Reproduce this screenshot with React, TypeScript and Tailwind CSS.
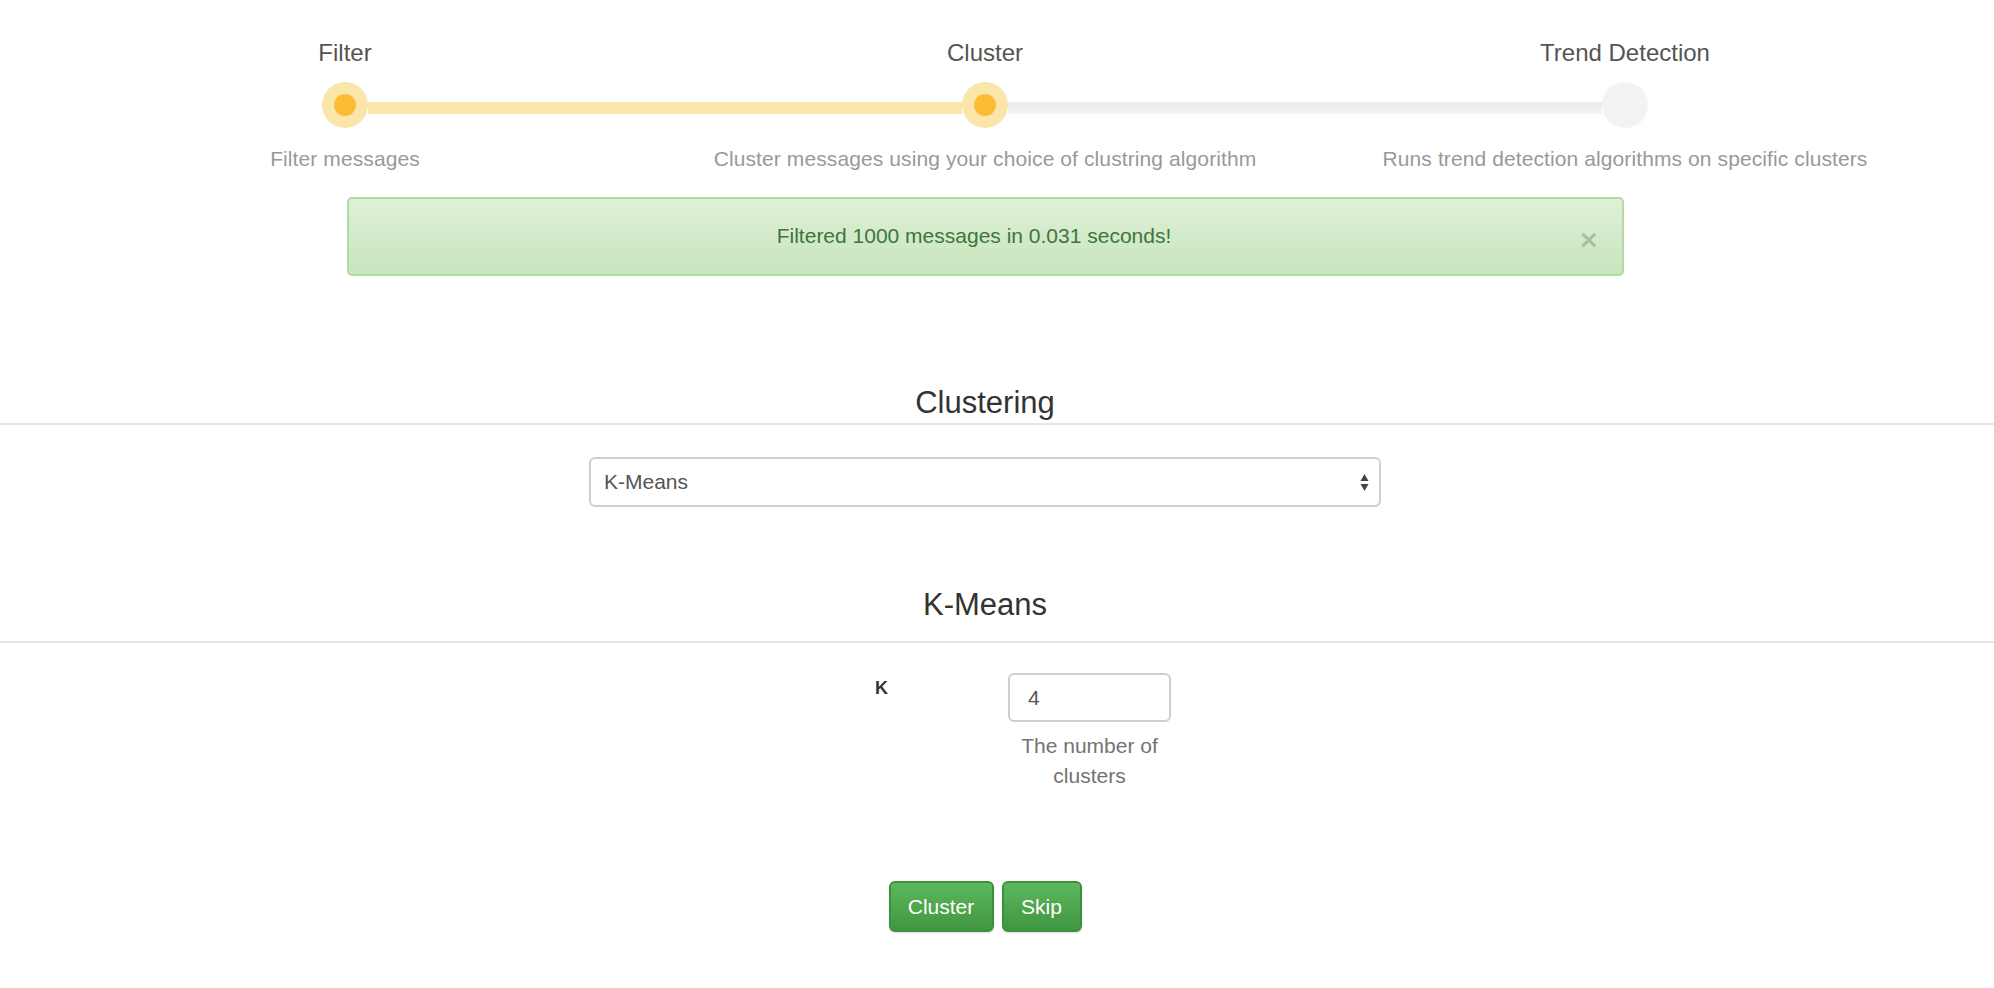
import { ReactNode } from 'react'

type Step = {
  title: string
  description: string
  done: boolean
  left?: 'done' | 'todo'
  right?: 'done' | 'todo'
}

const steps: Step[] = [
  { title: 'Filter', description: 'Filter messages', done: true, right: 'done' },
  {
    title: 'Cluster',
    description: 'Cluster messages using your choice of clustring algorithm',
    done: true,
    left: 'done',
    right: 'todo',
  },
  {
    title: 'Trend Detection',
    description: 'Runs trend detection algorithms on specific clusters',
    done: false,
    left: 'todo',
  },
]

// half of the line between two step dots
function Track({ kind }: { kind?: 'done' | 'todo' }) {
  if (!kind) return <div className="flex-1" />
  return (
    <div
      className={
        kind === 'done'
          ? 'flex-1 h-[12px] mt-[20px] bg-[#fae5ab]'
          : 'flex-1 h-[12px] mt-[20px] bg-gradient-to-b from-[#ebebeb] to-[#f4f4f4]'
      }
    />
  )
}

function StepItem({ step }: { step: Step }) {
  return (
    <div className="flex flex-col items-center">
      <div className="text-[24px] leading-[30px] text-[#555]">{step.title}</div>
      <div className="flex w-full mt-[14px] h-[46px]">
        <Track kind={step.left} />
        {step.done ? (
          <div className="size-[46px] rounded-full bg-[#fae5ab] flex items-center justify-center">
            <div className="size-[22px] rounded-full bg-[#fbbc34]" />
          </div>
        ) : (
          <div className="size-[46px] rounded-full bg-[#f3f3f3]" />
        )}
        <Track kind={step.right} />
      </div>
      <div className="mt-[18px] text-[21px] leading-[26px] text-[#999] tracking-[0.1px]">{step.description}</div>
    </div>
  )
}

function SectionTitle({ children }: { children: ReactNode }) {
  return <h3 className="text-center text-[31px] leading-[38px] text-[#333]">{children}</h3>
}

function Divider() {
  return <div className="h-[2px] w-full bg-[#e6e6e6]" />
}

export default function App() {
  return (
    <div className="min-h-screen bg-white font-['Liberation_Sans',Arial,sans-serif] text-[21px] text-[#333]">
      <div className="w-[1970px]">
        <div className="grid grid-cols-3 px-[25px] pt-[38px]">
          {steps.map(step => (
            <StepItem key={step.title} step={step} />
          ))}
        </div>

        <div className="mx-auto mt-[25px] w-[1277px] h-[79px] rounded-[5px] border-2 border-[#b2dba1] bg-gradient-to-b from-[#dff0d8] to-[#c8e5bc] flex items-center pr-[22px] relative">
          <div className="flex-1 text-center text-[#3c763d] pb-[2px]">Filtered 1000 messages in 0.031 seconds!</div>
          <button className="absolute right-[24px] top-[26px] text-[30px] leading-[30px] font-bold text-black/20">
            ×
          </button>
        </div>
      </div>

      <div className="mt-[108px]">
        <div className="w-[1970px]">
          <SectionTitle>Clustering</SectionTitle>
        </div>
        <div className="mt-[1px]">
          <Divider />
        </div>
        <div className="w-[1970px] flex justify-center mt-[32px]">
          <div className="w-[792px] h-[50px] rounded-[6px] border-2 border-[#cfcfcf] flex items-center justify-between pl-[13px] pr-[10px] text-[#555]">
            <span>K-Means</span>
            <svg width="9" height="20" viewBox="0 0 9 20">
              <path d="M4.5 2 L8.5 9 L0.5 9 Z" fill="#444" />
              <path d="M0.5 12 L8.5 12 L4.5 19 Z" fill="#444" />
            </svg>
          </div>
        </div>
      </div>

      <div className="mt-[79px]">
        <div className="w-[1970px]">
          <SectionTitle>K-Means</SectionTitle>
        </div>
        <div className="mt-[17px]">
          <Divider />
        </div>
        <div className="w-[1970px] flex justify-center gap-[120px] mt-[30px]">
          <label className="w-[89px] text-right font-bold text-[18px] leading-[18px] pt-[6px] text-[#333]">K</label>
          <div className="w-[163px] flex flex-col items-center">
            <div className="w-[163px] h-[49px] rounded-[6px] border-2 border-[#cfcfcf] flex items-center pl-[18px] text-[#555]">
              4
            </div>
            <div className="mt-[9px] text-center leading-[30px] text-[#737373] px-[8px]">The number of clusters</div>
          </div>
        </div>
        <div className="w-[1970px] flex justify-center gap-[8px] mt-[90px]">
          <button className="w-[105px] h-[51px] rounded-[6px] border-2 border-[#3e8f3e] bg-gradient-to-b from-[#5cb85c] to-[#419641] text-white shadow-[0_1px_2px_rgba(0,0,0,0.15)]">
            Cluster
          </button>
          <button className="w-[80px] h-[51px] rounded-[6px] border-2 border-[#3e8f3e] bg-gradient-to-b from-[#5cb85c] to-[#419641] text-white shadow-[0_1px_2px_rgba(0,0,0,0.15)]">
            Skip
          </button>
        </div>
      </div>
    </div>
  )
}
